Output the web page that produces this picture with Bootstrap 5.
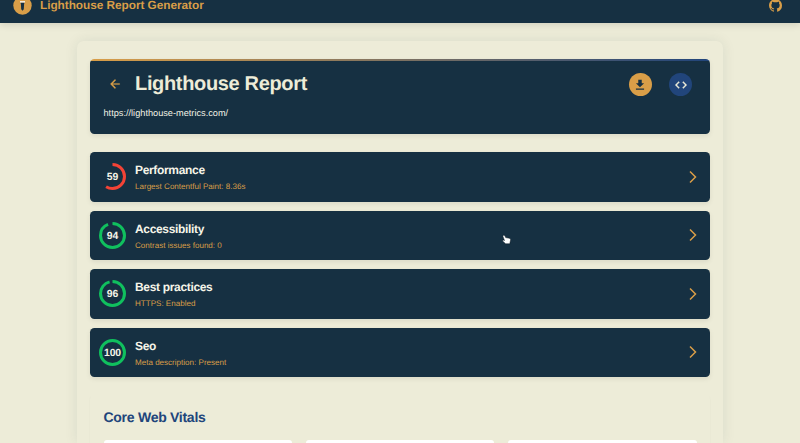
<!DOCTYPE html>
<html lang="en">
<head>
<meta charset="utf-8">
<meta name="viewport" content="width=device-width, initial-scale=1">
<title>Lighthouse Report Generator</title>
<link href="https://cdn.jsdelivr.net/npm/bootstrap@5.3.0/dist/css/bootstrap.min.css" rel="stylesheet">
<style>
:root{--navy:#163042;--gold:#d99e48;--cream:#edecd8;--blue:#21457b}
html,body{height:443px;overflow:hidden}
body{background:var(--cream);font-family:"Liberation Sans",Arial,sans-serif;color:var(--navy);text-rendering:geometricPrecision}
svg{display:block;flex:none}
.topbar{height:23px;background:var(--navy);box-shadow:0 2px 7px rgba(0,0,0,.12)}
.topbar-inner{height:10px;padding:0 18px 0 13px}
.brand-name{color:var(--gold);font-size:11.8px;font-weight:700;line-height:10px;letter-spacing:-.03px}
.page{height:420px;overflow:hidden;padding-top:18px}
.sheet{width:646px;height:402px;padding:18px 13px 0;border-radius:7px 7px 0 0;box-shadow:0 0 14px rgba(23,60,50,.09)}
.panel{background:var(--navy);border-radius:4.5px;box-shadow:0 2px 5px rgba(0,0,0,.08)}
.report-head{height:75px;padding:14px 18px 0 13.5px;margin-bottom:18px;overflow:hidden;background:linear-gradient(90deg,var(--gold),var(--blue)) 0 0/100% 2px no-repeat var(--navy)}
.report-head h1{font-size:20px;line-height:23px;font-weight:700;color:var(--cream);letter-spacing:-.34px}
.back{width:23px;height:22px;margin-right:8.5px}
.actions{gap:17.5px}
.round{width:23px;height:23px}
.round-gold{background:var(--gold)}
.round-blue{background:var(--blue)}
.url{font-size:9.2px;line-height:12px;margin-top:11px;color:#f3f2e6}
.scores{gap:9px}
.score{height:49.5px;padding:0 12px 0 9px}
.label{margin-left:9px;padding-top:2px}
.score h2{font-size:12px;line-height:14px;font-weight:700;color:#f5f4e8;letter-spacing:-.33px}
.score p{font-size:8.05px;line-height:10px;color:var(--gold);margin-top:5px}
.score text{font:700 10.4px "Liberation Sans",Arial,sans-serif;fill:#f5f4e8;text-anchor:middle;letter-spacing:-.1px}
.vitals{margin-top:18px;height:48px;padding:13px 13.5px 0;border-radius:4.5px 4.5px 0 0;box-shadow:0 1px 2px rgba(0,0,0,.05)}
.vitals h2{font-size:14px;line-height:18px;font-weight:700;color:var(--blue);margin-bottom:14px;letter-spacing:-.27px}
.tiles{gap:13.5px}
.tile{height:3px;border-radius:4.5px 4.5px 0 0}
.pointer{left:502px;top:234px}
</style>
</head>
<body>
<header class="topbar position-relative">
  <div class="topbar-inner d-flex align-items-center justify-content-between">
    <div class="d-flex align-items-center gap-2">
      <svg width="19" height="19" viewBox="0 0 19 19"><circle cx="9.5" cy="9.5" r="9.2" fill="#d99e48"/><path d="M7.4 6.5h4.2l-.5 1.6-.3 5.2-1.3 1.5-1.3-1.5-.3-5.2z" fill="#163042"/><path d="M7 5.2h5v1.3H7z" fill="#fff"/></svg>
      <span class="brand-name">Lighthouse Report Generator</span>
    </div>
    <svg width="13" height="13" viewBox="0 0 16 16" fill="#d99e48"><path d="M8 0C3.58 0 0 3.58 0 8c0 3.54 2.29 6.53 5.47 7.59.4.07.55-.17.55-.38 0-.19-.01-.82-.01-1.49-2.01.37-2.53-.49-2.69-.94-.09-.23-.48-.94-.82-1.13-.28-.15-.68-.52-.01-.53.63-.01 1.08.58 1.23.82.72 1.21 1.87.87 2.33.66.07-.52.28-.87.51-1.07-1.78-.2-3.64-.89-3.64-3.95 0-.87.31-1.59.82-2.15-.08-.2-.36-1.02.08-2.12 0 0 .67-.21 2.2.82a7.6 7.6 0 0 1 4 0c1.53-1.04 2.2-.82 2.2-.82.44 1.1.16 1.92.08 2.12.51.56.82 1.27.82 2.15 0 3.07-1.87 3.75-3.65 3.95.29.25.54.73.54 1.48 0 1.07-.01 1.93-.01 2.2 0 .21.15.46.55.38A8 8 0 0 0 16 8c0-4.42-3.58-8-8-8z"/></svg>
  </div>
</header>
<div class="page">
<main class="sheet mx-auto">
  <section class="panel report-head">
    <div class="d-flex align-items-start">
      <div class="back d-flex align-items-center justify-content-center"><svg width="14" height="14" viewBox="0 0 24 24" fill="#d99e48" stroke="#d99e48" stroke-width=".4"><path d="M20 11H7.83l5.59-5.59L12 4l-8 8 8 8 1.41-1.41L7.83 13H20z"/></svg></div>
      <h1 class="mb-0">Lighthouse Report</h1>
      <div class="actions d-flex ms-auto">
        <div class="round round-gold rounded-circle d-flex align-items-center justify-content-center"><svg width="14" height="14" viewBox="0 0 24 24" fill="#163042"><path d="M5 20h14v-2H5zM19 9h-4V3H9v6H5l7 7z"/></svg></div>
        <div class="round round-blue rounded-circle d-flex align-items-center justify-content-center"><svg width="14" height="14" viewBox="0 0 24 24" fill="#edecd8" stroke="#edecd8" stroke-width=".6"><path d="M9.4 16.6 4.8 12l4.6-4.6L8 6l-6 6 6 6zm5.2 0 4.6-4.6-4.6-4.6L16 6l6 6-6 6z"/></svg></div>
      </div>
    </div>
    <div class="url">https://lighthouse-metrics.com/</div>
  </section>
  <div class="scores d-flex flex-column">
    <section class="panel score d-flex align-items-center">
      <svg width="27" height="27" viewBox="0 0 27 27"><circle cx="13.5" cy="13.5" r="12" fill="none" stroke="#f44336" stroke-width="3" pathLength="100" stroke-dasharray="59 100" transform="rotate(-90 13.5 13.5)"/><text x="13.5" y="17.3">59</text></svg>
      <div class="label"><h2 class="mb-0">Performance</h2><p class="mb-0">Largest Contentful Paint: 8.36s</p></div>
      <svg class="ms-auto" width="10" height="14" viewBox="0 0 10 14" fill="none" stroke="#d99e48" stroke-width="1.5"><path d="M2 1.5 7.5 7 2 12.5"/></svg>
    </section>
    <section class="panel score d-flex align-items-center">
      <svg width="27" height="27" viewBox="0 0 27 27"><circle cx="13.5" cy="13.5" r="12" fill="none" stroke="#10c05e" stroke-width="3" pathLength="100" stroke-dasharray="94 100" transform="rotate(-90 13.5 13.5)"/><text x="13.5" y="17.3">94</text></svg>
      <div class="label"><h2 class="mb-0">Accessibility</h2><p class="mb-0">Contrast issues found: 0</p></div>
      <svg class="ms-auto" width="10" height="14" viewBox="0 0 10 14" fill="none" stroke="#d99e48" stroke-width="1.5"><path d="M2 1.5 7.5 7 2 12.5"/></svg>
    </section>
    <section class="panel score d-flex align-items-center">
      <svg width="27" height="27" viewBox="0 0 27 27"><circle cx="13.5" cy="13.5" r="12" fill="none" stroke="#10c05e" stroke-width="3" pathLength="100" stroke-dasharray="96 100" transform="rotate(-90 13.5 13.5)"/><text x="13.5" y="17.3">96</text></svg>
      <div class="label"><h2 class="mb-0">Best practices</h2><p class="mb-0">HTTPS: Enabled</p></div>
      <svg class="ms-auto" width="10" height="14" viewBox="0 0 10 14" fill="none" stroke="#d99e48" stroke-width="1.5"><path d="M2 1.5 7.5 7 2 12.5"/></svg>
    </section>
    <section class="panel score d-flex align-items-center">
      <svg width="27" height="27" viewBox="0 0 27 27"><circle cx="13.5" cy="13.5" r="12" fill="none" stroke="#10c05e" stroke-width="3"/><text x="13.5" y="17.3">100</text></svg>
      <div class="label"><h2 class="mb-0">Seo</h2><p class="mb-0">Meta description: Present</p></div>
      <svg class="ms-auto" width="10" height="14" viewBox="0 0 10 14" fill="none" stroke="#d99e48" stroke-width="1.5"><path d="M2 1.5 7.5 7 2 12.5"/></svg>
    </section>
  </div>
  <section class="vitals">
    <h2>Core Web Vitals</h2>
    <div class="tiles d-flex"><div class="tile bg-white flex-fill"></div><div class="tile bg-white flex-fill"></div><div class="tile bg-white flex-fill"></div></div>
  </section>
</main>
</div>
<svg class="pointer position-absolute" width="9" height="11" viewBox="0 0 9 11"><path d="M1.2 1.4c.8-.6 1.5 0 1.8.7l.7 1.5 3.6.6c1.1.2 1.5 1 1.2 2.1L7.8 9.8H3.6L.8 7.2c-.4-.8.3-1.3 1-1l.7.3L1 2.7c-.2-.5-.1-1 .2-1.3z" fill="#fff" stroke="#0b1720" stroke-width=".5"/></svg>
<script src="https://cdn.jsdelivr.net/npm/bootstrap@5.3.0/dist/js/bootstrap.bundle.min.js"></script>
</body>
</html>
